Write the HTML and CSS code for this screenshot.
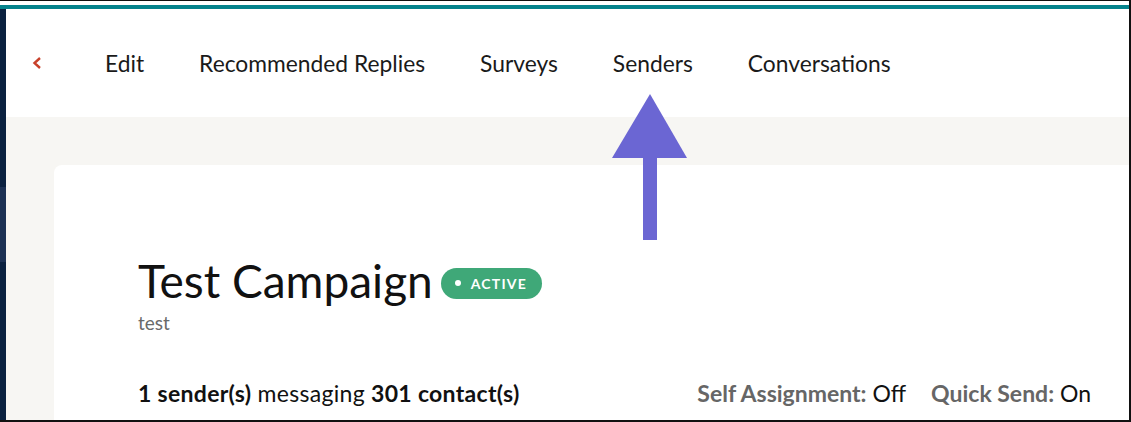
FILE: index.html
```html
<!DOCTYPE html>
<html>
<head>
<meta charset="utf-8">
<link rel="stylesheet" href="styles.css">
</head>
<body>
<div class="frame">
  <div class="topbar"></div>
  <div class="layout">
    <div class="sidebar">
      <div class="side-active"></div>
    </div>
    <div class="main">
      <nav class="nav">
        <span class="back">
          <svg width="10" height="12" viewBox="0 0 10 12"><path d="M8 1 L2.5 6 L8 11" fill="none" stroke="#c8412b" stroke-width="2.4"/></svg>
        </span>
        <a class="nav-item">Edit</a>
        <a class="nav-item">Recommended Replies</a>
        <a class="nav-item">Surveys</a>
        <a class="nav-item">Senders</a>
        <a class="nav-item">Conversations</a>
      </nav>
      <div class="content">
        <div class="card">
          <div class="title-row">
            <h1 class="title">Test Campaign</h1>
            <span class="badge"><span class="dot"></span>ACTIVE</span>
          </div>
          <div class="subtitle">test</div>
          <div class="stats">
            <div class="stats-left"><b>1 sender(s)</b> messaging <b>301 contact(s)</b></div>
            <div class="stats-right">
              <span class="setting"><b>Self Assignment:</b> Off</span>
              <span class="setting"><b>Quick Send:</b> On</span>
            </div>
          </div>
        </div>
      </div>
    </div>
  </div>
  <svg class="arrow" width="76" height="148" viewBox="0 0 76 148">
    <polygon points="38,0 75,64 0,64" fill="#6b66d3"/>
    <rect x="31" y="63" width="14" height="83" fill="#6b66d3"/>
  </svg>
</div>
</body>
</html>
```

FILE: styles.css
```css
* { box-sizing: border-box; }
html, body { margin: 0; padding: 0; background: #fff; }
body { font-family: Lato, "Open Sans", sans-serif; color: #111; }
.frame {
  position: relative;
  width: 1131px;
  height: 422px;
  border-top: 1px solid #111;
  border-right: 2px solid #111;
  border-bottom: 2px solid #111;
  padding-top: 4px;
  overflow: hidden;
  display: flex;
  flex-direction: column;
}
.topbar { height: 4px; background: #04838c; flex: none; }
.layout { flex: 1; display: flex; min-height: 0; }
.sidebar { width: 6px; background: #0b2140; flex: none; padding-top: 178px; }
.side-active { height: 75px; background: #1d3154; }
.main { flex: 1; display: flex; flex-direction: column; min-width: 0; }
.nav {
  height: 108px;
  flex: none;
  display: flex;
  align-items: center;
  padding-left: 26px;
  padding-bottom: 1px;
  gap: 55px;
  background: #fff;
}
.back { display: flex; width: 37px; margin-right: -19px; }
.nav-item { font-size: 22.8px; color: #1a1a1a; }
.content {
  flex: 1;
  background: #f7f6f3;
  padding: 48px 0 0 48px;
}
.card {
  background: #fff;
  border-radius: 8px 0 0 0;
  height: 100%;
  margin-right: -20px;
  padding: 89px 0 0 84px;
}
.title-row { display: flex; align-items: center; gap: 10px; }
.title { margin: 0; font-weight: 400; font-size: 46px; line-height: 54px; color: #111; }
.badge {
  display: inline-flex;
  align-items: center;
  height: 31px;
  padding: 0 15px 0 14px;
  background: #3fa878;
  color: #fff;
  border-radius: 16px;
  font-size: 14px;
  font-weight: 700;
  letter-spacing: 1.2px;
  margin-top: 4px;
  margin-left: -2px;
}
.dot { width: 6px; height: 6px; border-radius: 50%; background: #fff; margin-right: 10px; }
.subtitle { font-size: 19px; color: #6a6a6a; margin-top: 3px; line-height: 24px; }
.stats {
  display: flex;
  justify-content: space-between;
  align-items: baseline;
  margin-top: 44px;
  padding-right: 58px;
  font-size: 23px;
  line-height: 28px;
}
.stats-left { letter-spacing: 0.3px; }
.stats-left b { font-weight: 700; color: #111; }
.stats-right { display: flex; gap: 25px; }
.setting { color: #111; }
.setting b { color: #666; font-weight: 700; }
.arrow { position: absolute; left: 612px; top: 93px; }
```
